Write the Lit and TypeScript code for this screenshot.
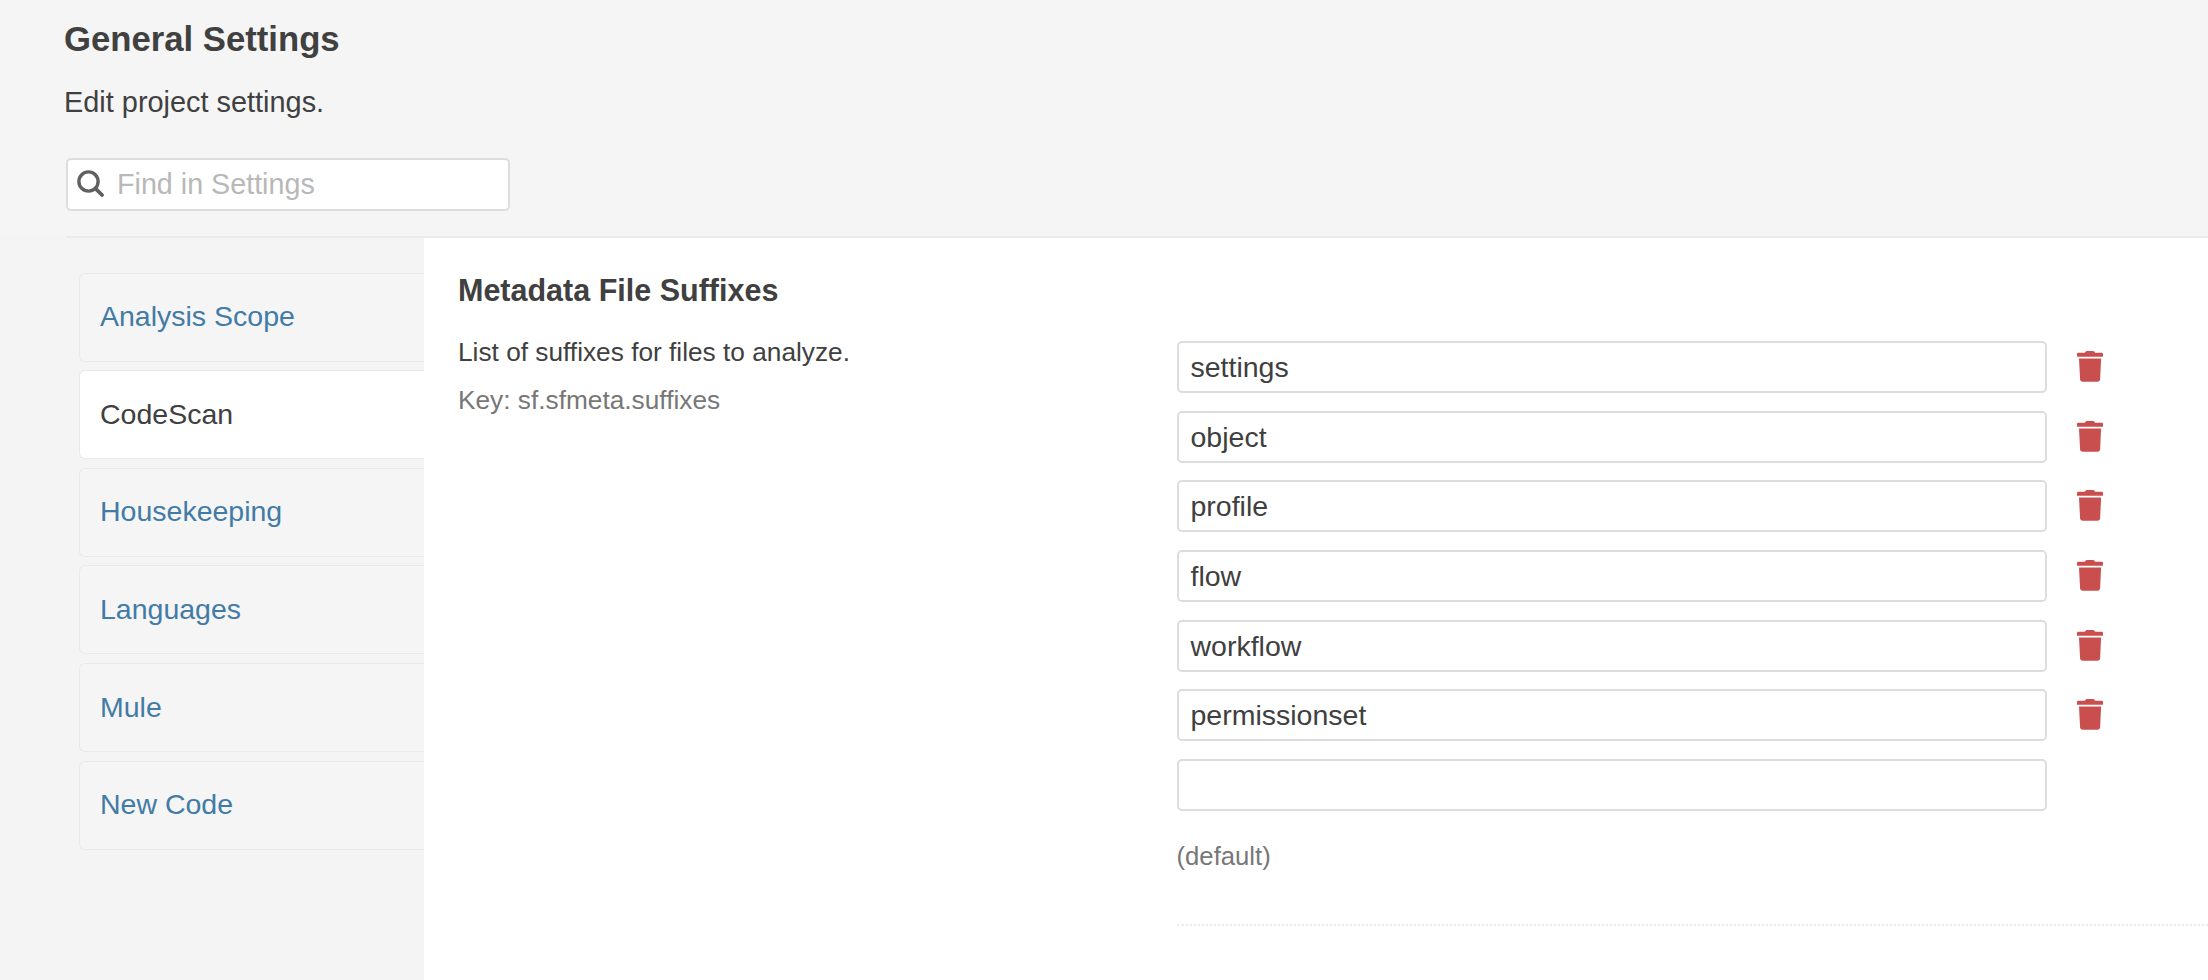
import { LitElement, html, css, nothing } from "lit";
import { customElement, state } from "lit/decorators.js";

@customElement("delete-icon")
class DeleteIcon extends LitElement {
  static styles = css`
    :host { display: block; width: 26px; height: 31px; }
    svg { display: block; }
  `;
  render() {
    return html`<svg width="26" height="31" viewBox="0 0 26 31" fill="#c94f4f">
      <path d="M0 3Q0 1.8 1.2 1.8H7.9L8.7 .6Q9.1 0 9.9 0H16.1Q16.9 0 17.3 .6L18.1 1.8H24.8Q26 1.8 26 3V5.7H0Z"/>
      <path d="M2 7.5H24.1L23.1 28.6Q22.9 30.7 20.8 30.7H5.4Q3.3 30.7 3.1 28.6Z"/>
    </svg>`;
  }
}

@customElement("app-root")
class AppRoot extends LitElement {
  @state() categories = ["Analysis Scope", "CodeScan", "Housekeeping", "Languages", "Mule", "New Code"];
  @state() selected = "CodeScan";
  @state() values = ["settings", "object", "profile", "flow", "workflow", "permissionset", ""];

  static styles = css`
    * { box-sizing: border-box; }
    :host {
      display: flex; flex-direction: column; height: 980px; overflow: hidden;
      background: #f4f4f4; color: #404040;
      font-family: "Liberation Sans", Arial, sans-serif; font-size: 28.5px;
    }
    h1, h2, p { margin: 0; white-space: nowrap; }
    .head { height: 236px; flex: none; padding-left: 64px; background: #f5f5f5; }
    .title { padding-top: 19px; font-size: 34.7px; line-height: 40px; font-weight: 700; }
    .sub { padding-top: 27px; line-height: 32px; font-size: 28.9px; }
    .search {
      display: flex; align-items: center; width: 444px; height: 53px; margin: 40px 0 0 2px;
      padding-left: 9px; gap: 13px; background: #fff; border: 2px solid #dddddd; border-radius: 5px;
    }
    .glass { display: block; margin-bottom: 3px; }
    .placeholder { color: #b8b8b8; font-size: 28.7px; }
    .body { display: flex; flex: 1; min-height: 0; margin-left: 66px; border-top: 2px solid #ebebeb; }
    .nav { display: flex; flex-direction: column; gap: 8.6px; width: 358px; padding: 34.7px 0 0 13px; }
    .tab {
      display: flex; align-items: center; height: 89px; flex: none; padding: 0 0 1px 20px; color: #427ba5;
      background: #f5f5f5; border: 1.5px solid #e9e9e9; border-right: 0; border-radius: 6px 0 0 6px;
    }
    .tab.active { background: #fff; color: #404040; }
    .panel { display: flex; flex: 1; background: #fff; padding-left: 34px; }
    .info { width: 718.5px; padding-top: 34px; font-size: 26.25px; }
    .name { font-size: 30.5px; line-height: 36px; }
    .desc { padding-top: 29px; line-height: 30px; }
    .key { padding-top: 18px; line-height: 30px; color: #777; }
    .editor { flex: 1; padding-top: 103.2px; }
    .rows { display: flex; flex-direction: column; gap: 17.6px; }
    .row { display: flex; align-items: center; gap: 30.5px; height: 52px; }
    .row delete-icon { margin-bottom: 1px; }
    .field {
      display: flex; align-items: center; width: 870px; height: 52px; padding: 1px 0 0 12px;
      border: 2px solid #dddddd; border-radius: 5px;
    }
    .default { height: 115px; padding-top: 30px; font-size: 25.7px; line-height: 30px; color: #777; border-bottom: 2px dotted #ebebeb; }
  `;

  render() {
    return html`
      <header class="head">
        <h1 class="title">General Settings</h1>
        <p class="sub">Edit project settings.</p>
        <div class="search">
          <svg class="glass" width="27" height="27" viewBox="0 0 27 27" fill="none" stroke="#606060">
            <circle cx="11.5" cy="11.5" r="9.6" stroke-width="3.4"/>
            <path d="M18.6 18.6L25 25" stroke-width="3.8" stroke-linecap="round"/>
          </svg>
          <span class="placeholder">Find in Settings</span>
        </div>
      </header>
      <div class="body">
        <nav class="nav">
          ${this.categories.map((c) => html`<a class="tab ${c === this.selected ? "active" : ""}">${c}</a>`)}
        </nav>
        <main class="panel">
          <section class="info">
            <h2 class="name">Metadata File Suffixes</h2>
            <p class="desc">List of suffixes for files to analyze.</p>
            <p class="key">Key: sf.sfmeta.suffixes</p>
          </section>
          <section class="editor">
            <div class="rows">
              ${this.values.map((v) => html`<div class="row"><div class="field">${v}</div>${v ? html`<delete-icon></delete-icon>` : nothing}</div>`)}
            </div>
            <div class="default">(default)</div>
          </section>
        </main>
      </div>`;
  }
}
